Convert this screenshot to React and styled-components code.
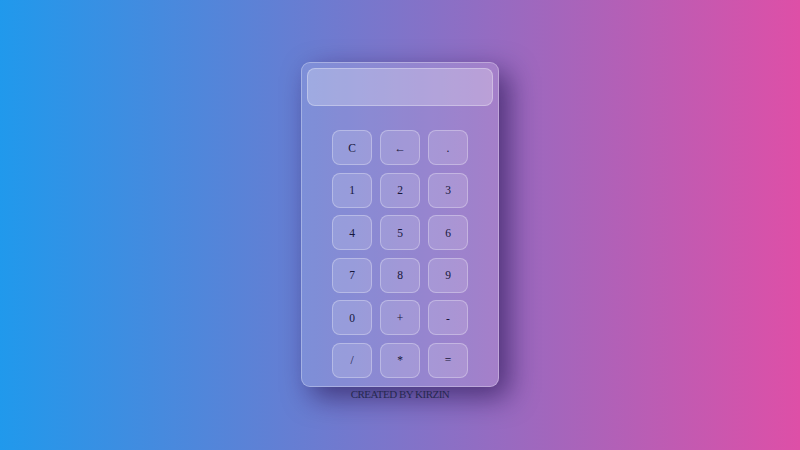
import React from "react";
import styled, { createGlobalStyle } from "styled-components";

const GlobalStyle = createGlobalStyle`
  * {
    box-sizing: border-box;
  }
  html, body {
    margin: 0;
    padding: 0;
  }
  body {
    font-family: "Liberation Serif", "Times New Roman", serif;
  }
`;

const Page = styled.main`
  width: 800px;
  height: 450px;
  background: linear-gradient(to right, #2099ec, #de4fa7);
  display: flex;
  flex-direction: column;
  align-items: center;
  padding-top: 62px;
`;

const Calculator = styled.div`
  width: 198px;
  height: 325px;
  padding: 5px;
  border-radius: 9px;
  background: rgba(255, 255, 255, 0.14);
  border: 1px solid rgba(255, 255, 255, 0.3);
  box-shadow: 10px 10px 28px rgba(30, 10, 70, 0.6);
  display: flex;
  flex-direction: column;
  align-items: center;
`;

const Display = styled.div`
  width: 100%;
  height: 38px;
  border-radius: 8px;
  background: rgba(255, 255, 255, 0.25);
  border: 1px solid rgba(255, 255, 255, 0.3);
`;

const Keys = styled.div`
  margin-top: 24px;
  display: grid;
  grid-template-columns: repeat(3, 40px);
  grid-auto-rows: 35px;
  column-gap: 8px;
  row-gap: 7.6px;
`;

const Key = styled.button`
  border-radius: 8px;
  background: rgba(255, 255, 255, 0.15);
  border: 1px solid rgba(255, 255, 255, 0.3);
  font-family: "Liberation Serif", "Times New Roman", serif;
  font-size: 11.5px;
  color: #16173a;
  padding: 0;
  cursor: pointer;
  display: flex;
  align-items: center;
  justify-content: center;
`;

const Credit = styled.p`
  margin: 1px 0 0;
  font-size: 11px;
  letter-spacing: -0.5px;
  color: #262850;
`;

const keys = ["C", "←", ".", "1", "2", "3", "4", "5", "6", "7", "8", "9", "0", "+", "-", "/", "*", "="];

const App = () => {
  return (
    <>
      <GlobalStyle />
      <Page>
        <Calculator>
          <Display />
          <Keys>
            {keys.map((k) => (
              <Key key={k}>{k}</Key>
            ))}
          </Keys>
        </Calculator>
        <Credit>CREATED BY KIRZIN</Credit>
      </Page>
    </>
  );
};

export default App;
